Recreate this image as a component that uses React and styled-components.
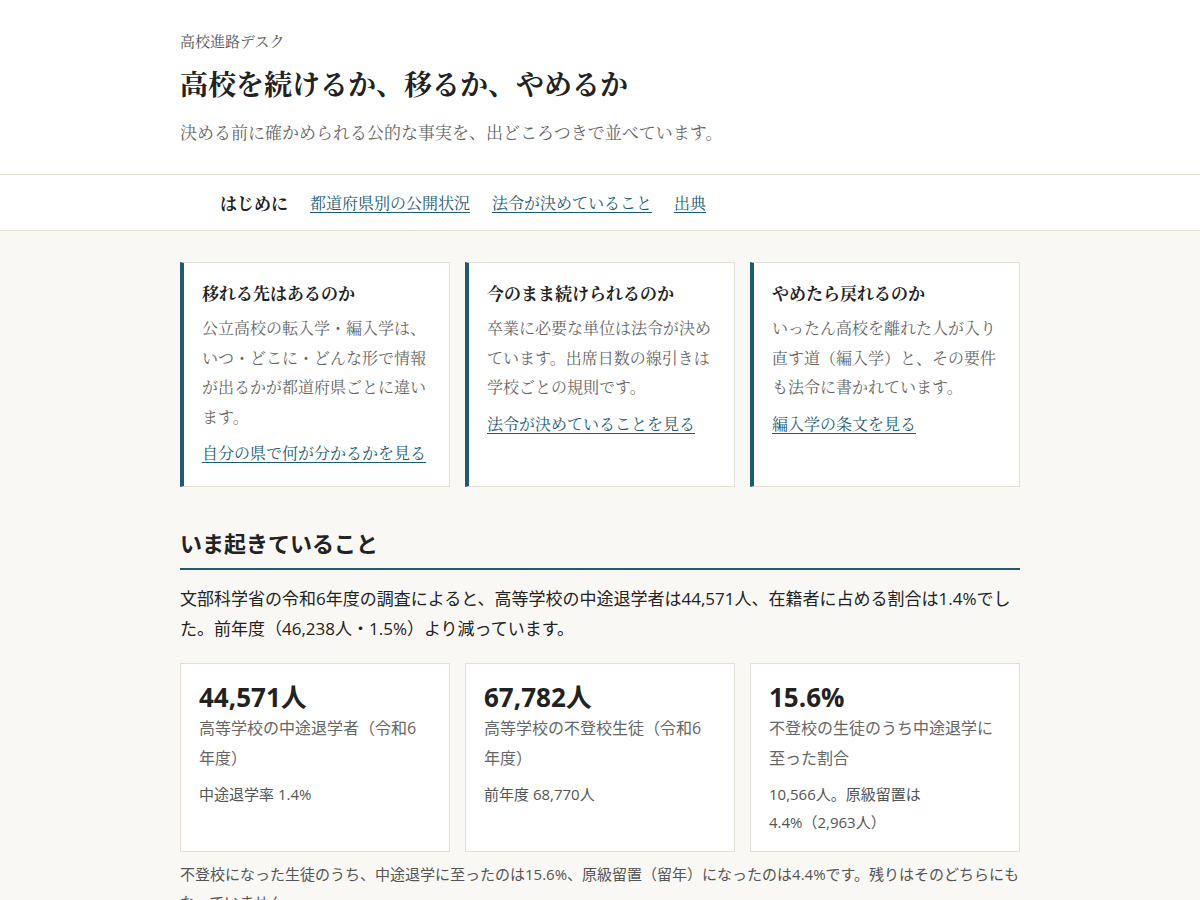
import styled, { createGlobalStyle } from "styled-components";

const GlobalStyle = createGlobalStyle`
  html, body {
    margin: 0;
    padding: 0;
    background: #faf8f4;
    color: #222;
  }
  * { box-sizing: border-box; }
`;

const serif = `"Liberation Serif", "Noto Serif CJK JP", serif`;
const sans = `"Open Sans", "Noto Sans CJK JP", sans-serif`;

const intro = [
  {
    title: "移れる先はあるのか",
    body: "公立高校の転入学・編入学は、いつ・どこに・どんな形で情報が出るかが都道府県ごとに違います。",
    link: "自分の県で何が分かるかを見る",
  },
  {
    title: "今のまま続けられるのか",
    body: "卒業に必要な単位は法令が決めています。出席日数の線引きは学校ごとの規則です。",
    link: "法令が決めていることを見る",
  },
  {
    title: "やめたら戻れるのか",
    body: "いったん高校を離れた人が入り直す道（編入学）と、その要件も法令に書かれています。",
    link: "編入学の条文を見る",
  },
];

const stats = [
  { value: "44,571人", label: "高等学校の中途退学者（令和6年度）", note: "中途退学率 1.4%" },
  { value: "67,782人", label: "高等学校の不登校生徒（令和6年度）", note: "前年度 68,770人" },
  { value: "15.6%", label: "不登校の生徒のうち中途退学に至った割合", note: "10,566人。原級留置は4.4%（2,963人）" },
];

const App = () => {
  return (
    <>
      <GlobalStyle />
      <Header>
        <Inner>
          <SiteName>高校進路デスク</SiteName>
          <Title>高校を続けるか、移るか、やめるか</Title>
          <Lead>決める前に確かめられる公的な事実を、出どころつきで並べています。</Lead>
        </Inner>
      </Header>

      <Nav>
        <NavInner>
          <NavCurrent>はじめに</NavCurrent>
          <NavLink href="#">都道府県別の公開状況</NavLink>
          <NavLink href="#">法令が決めていること</NavLink>
          <NavLink href="#">出典</NavLink>
        </NavInner>
      </Nav>

      <Main>
        <Inner>
          <CardGrid>
            {intro.map((c) => (
              <QuestionCard key={c.title}>
                <CardTitle>{c.title}</CardTitle>
                <CardBody>{c.body}</CardBody>
                <CardLink href="#">{c.link}</CardLink>
              </QuestionCard>
            ))}
          </CardGrid>

          <SectionTitle>いま起きていること</SectionTitle>
          <Paragraph>
            文部科学省の令和6年度の調査によると、高等学校の中途退学者は44,571人、在籍者に占める割合は1.4%でした。前年度（46,238人・1.5%）より減っています。
          </Paragraph>

          <StatGrid>
            {stats.map((s) => (
              <StatCard key={s.value}>
                <StatValue>{s.value}</StatValue>
                <StatLabel>{s.label}</StatLabel>
                <StatNote>{s.note}</StatNote>
              </StatCard>
            ))}
          </StatGrid>

          <SmallText>
            不登校になった生徒のうち、中途退学に至ったのは15.6%、原級留置（留年）になったのは4.4%です。残りはそのどちらにもなっていません。
          </SmallText>
        </Inner>
      </Main>
    </>
  );
};

const Inner = styled.div`
  width: 840px;
  margin: 0 auto;
`;

const Header = styled.header`
  background: #fff;
  border-bottom: 1px solid #e3e0d8;
  padding: 31px 0 26px;
  font-family: ${serif};
`;

const SiteName = styled.div`
  font-size: 15px;
  color: #555;
  line-height: 22px;
`;

const Title = styled.h1`
  margin: 13px 0 0;
  font-size: 28px;
  font-weight: bold;
  line-height: 40px;
  color: #222;
`;

const Lead = styled.p`
  margin: 14px 0 0;
  font-size: 17px;
  color: #666;
  line-height: 28px;
`;

const Nav = styled.nav`
  background: #fff;
  border-bottom: 1px solid #e3e0d8;
  font-family: ${serif};
`;

const NavInner = styled.div`
  width: 840px;
  margin: 0 auto;
  display: flex;
  align-items: center;
  gap: 22px;
  height: 55px;
  padding-left: 40px;
`;

const NavCurrent = styled.span`
  font-size: 17px;
  font-weight: bold;
  color: #222;
`;

const NavLink = styled.a`
  font-size: 16px;
  color: #1d5b70;
  text-decoration: underline;
  text-underline-offset: 3px;
`;

const Main = styled.main`
  padding: 31px 0 40px;
`;

const CardGrid = styled.div`
  display: grid;
  grid-template-columns: repeat(3, 1fr);
  gap: 15px;
`;

const QuestionCard = styled.div`
  background: #fff;
  border: 1px solid #e3e0d8;
  border-left: 4px solid #1d5b70;
  padding: 18px 18px 18px;
  font-family: ${serif};
`;

const CardTitle = styled.h3`
  margin: 0;
  font-size: 17px;
  font-weight: bold;
  line-height: 28px;
  color: #222;
`;

const CardBody = styled.p`
  margin: 5px 0 0;
  font-size: 16px;
  line-height: 29.5px;
  color: #666;
`;

const CardLink = styled.a`
  display: inline-block;
  margin-top: 8px;
  font-size: 16px;
  line-height: 28px;
  color: #1d5b70;
  text-decoration: underline;
  text-underline-offset: 3px;
`;

const SectionTitle = styled.h2`
  margin: 39px 0 0;
  padding-bottom: 8px;
  border-bottom: 2px solid #1d5b70;
  font-family: ${sans};
  font-size: 22px;
  font-weight: bold;
  line-height: 34px;
  color: #222;
`;

const Paragraph = styled.p`
  margin: 14px 0 0;
  font-family: ${sans};
  font-size: 17px;
  line-height: 30px;
  color: #222;
`;

const StatGrid = styled.div`
  display: grid;
  grid-template-columns: repeat(3, 1fr);
  gap: 15px;
  margin-top: 19px;
`;

const StatCard = styled.div`
  background: #fff;
  border: 1px solid #e3e0d8;
  padding: 16px 18px 15px;
  font-family: ${sans};
`;

const StatValue = styled.div`
  font-size: 26px;
  font-weight: bold;
  line-height: 34px;
  color: #222;
`;

const StatLabel = styled.div`
  font-size: 16px;
  line-height: 29.5px;
  color: #666;
`;

const StatNote = styled.div`
  margin-top: 7px;
  font-size: 15px;
  line-height: 28px;
  color: #555;
`;

const SmallText = styled.p`
  margin: 8px 0 0;
  font-family: ${sans};
  font-size: 15px;
  line-height: 28px;
  color: #555;
`;

export default App;
